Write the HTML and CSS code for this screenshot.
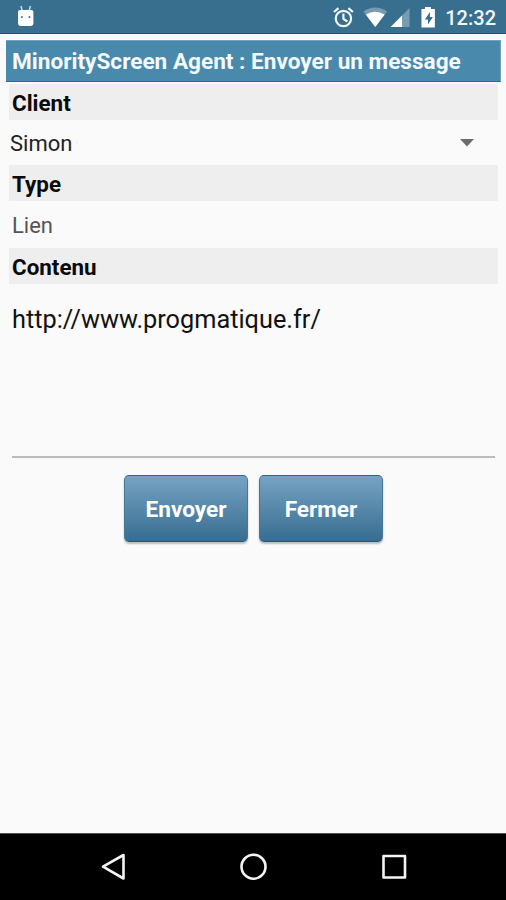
FILE: index.html
```html
<!DOCTYPE html>
<html lang="fr">
<head>
<meta charset="utf-8">
<title>MinorityScreen Agent</title>
<link rel="stylesheet" href="styles.css">
</head>
<body>
<header class="status">
  <svg class="droid" width="18" height="22" viewBox="0 0 18 22"><path d="M4 1l1.400 5M13.500 1l-1.400 5" stroke="#c9dce8" stroke-width="1.500"/><path d="M1 7q0-2 2-2h11.500q2 0 2 2v11q0 3-3 3H4q-3 0-3-3z" fill="#fff"/><circle cx="5" cy="12" r="1" fill="#386e8e"/><circle cx="12.500" cy="12" r="1" fill="#386e8e"/></svg>
  <svg class="icons" width="110" height="24" viewBox="330 6 110 24">
    <g fill="none" stroke="#f2f7fa" stroke-width="2.200"><circle cx="343.500" cy="18.500" r="7.700"/><path d="M334 12l4.500-4M353 12l-4.500-4M343.500 13.500v5.500l4 2.500"/></g>
    <path d="M363.500 11.500Q375.500 3.500 387.500 11.500L375.500 27z" fill="#779bb1"/>
    <path d="M366 14.500Q375.500 9 385 14.500L375.500 27z" fill="#fff"/>
    <path d="M410 8v19h-19z" fill="#779bb1"/><path d="M402.500 15.500V27H391z" fill="#fff"/>
    <path d="M425.500 7h6v2h4v18.500h-13.500V9h3.500z" fill="#fff"/><path d="M430.500 12l-5 7.500h3v5l5-7.500h-3z" fill="#386e8e"/>
  </svg>
  <span class="clock">12:32</span>
</header>
<main class="screen">
  <h1 class="title"><span>MinorityScreen Agent : Envoyer un message</span></h1>
  <h2 class="label">Client</h2>
  <div class="field select"><span>Simon</span><svg width="14" height="8" viewBox="0 0 14 8"><path d="M0 0h14L7 7.500z" fill="#6b6b6b"/></svg></div>
  <h2 class="label lower">Type</h2>
  <div class="field type">Lien</div>
  <h2 class="label lower">Contenu</h2>
  <div class="content">http://www.progmatique.fr/</div>
  <div class="actions"><button class="btn">Envoyer</button><button class="btn">Fermer</button></div>
</main>
<nav class="nav">
  <svg width="506" height="66" viewBox="0 834 506 66" fill="none" stroke="#f4f4f4" stroke-width="2.600" stroke-linejoin="round"><path d="M123.500 855v23.500L103 866.700z"/><circle cx="253.500" cy="866.700" r="12"/><rect x="383.500" y="856" width="21.500" height="21.500"/></svg>
</nav>
</body>
</html>
```
FILE: styles.css
```css
* { box-sizing: border-box; }
body {
  margin: 0;
  height: 900px;
  display: flex;
  flex-direction: column;
  background: #fafafa;
  font-family: Roboto, "Liberation Sans", sans-serif;
  color: #111;
  overflow: hidden;
}
.status {
  height: 34px;
  display: flex;
  align-items: center;
  background: #386e8e;
  border-bottom: 1px solid #145579;
  padding: 2px 10px 0 17px;
}
.droid { margin-top: -4px; }
.icons { margin-left: 295px; }
.clock {
  margin-left: 6px;
  color: #f2f7fa;
  font-size: 20px;
  font-weight: 500;
  line-height: 24px;
  white-space: nowrap;
}
.screen { flex: 1; padding: 6px 5px 0 6px; }
.title {
  margin: 0 0 2px;
  height: 42px;
  padding-left: 6px;
  background: #4889ac;
  border: 1px solid #71a3bf;
  border-left-width: 0;
  border-bottom-color: #1a7295;
  color: #f4f9fc;
  font-size: 22.600px;
  font-weight: 700;
  line-height: 42px;
  white-space: nowrap;
}
.label {
  margin: 0 3px;
  height: 36px;
  padding-left: 3px;
  background: #eee;
  color: #0a0a0a;
  font-size: 22.400px;
  font-weight: 700;
  line-height: 39px;
}
.field { font-size: 22px; }
.select {
  height: 45px;
  display: flex;
  align-items: center;
  justify-content: space-between;
  padding: 1px 27px 0 4px;
  color: #222;
}
.type {
  height: 47px;
  line-height: 49px;
  padding-left: 6px;
  color: #555;
}
.content {
  height: 174px;
  margin: 0 6px;
  padding-top: 20px;
  border-bottom: 2px solid #bbb;
  font-size: 25.300px;
  line-height: 32px;
}
.actions {
  display: flex;
  justify-content: center;
  gap: 11px;
  margin-top: 17px;
}
.btn {
  width: 124px;
  height: 67px;
  padding: 2px 0 0;
  border: 1px solid #457897;
  border-top-color: #2d6687;
  border-bottom-color: #1e5b80;
  border-radius: 5px;
  background: linear-gradient(#76a3c3, #386d90);
  box-shadow: 0 2px 2px #bbb;
  color: #fff;
  font: 700 22.600px Roboto, "Liberation Sans", sans-serif;
}
.nav {
  height: 67px;
  background: #000;
  border-top: 1px solid #555;
}
.nav svg { display: block; }
```
